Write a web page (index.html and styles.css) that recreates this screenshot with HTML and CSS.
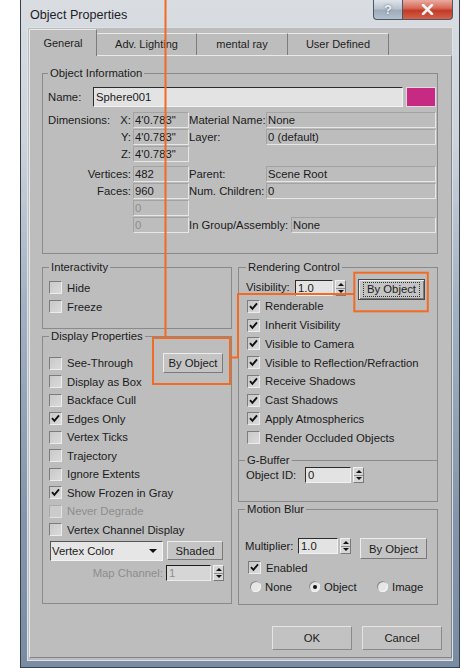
FILE: index.html
```html
<!DOCTYPE html>
<html>
<head>
<meta charset="utf-8">
<title>Object Properties</title>
<link rel="stylesheet" href="styles.css">
</head>
<body>
<div class="window">
  <div class="titlebar">
    <span class="title">Object Properties</span>
    <div class="caption">
      <span class="cap help">?</span>
      <span class="cap close"><svg width="13" height="11" viewBox="0 0 13 11"><path d="M2 1 L11 10 M11 1 L2 10" stroke="#fbf4f2" stroke-width="2.6" stroke-linecap="round"/></svg></span>
    </div>
  </div>

  <div class="client">
    <div class="tabs">
      <div class="tab active t-general">General</div>
      <div class="tab t-adv">Adv. Lighting</div>
      <div class="tab t-mental">mental ray</div>
      <div class="tab t-user">User Defined</div>
    </div>

    <div class="panel">
      <fieldset class="group info">
        <legend>Object Information</legend>
        <div class="name-row">
          <span class="name-label">Name:</span>
          <span class="edit name-edit">Sphere001</span>
          <span class="swatch"></span>
        </div>
        <div class="info-grid">
          <span class="lbl split r1 c1"><span>Dimensions:</span><span>X:</span></span>
          <span class="ro r1 c2">4'0.783"</span>
          <span class="lbl r1 c3">Material Name:</span>
          <span class="ro r1 c4">None</span>

          <span class="lbl right r2 c1">Y:</span>
          <span class="ro r2 c2">4'0.783"</span>
          <span class="lbl r2 c3">Layer:</span>
          <span class="ro r2 c4">0 (default)</span>

          <span class="lbl right r3 c1">Z:</span>
          <span class="ro r3 c2">4'0.783"</span>

          <span class="lbl right r4 c1">Vertices:</span>
          <span class="ro r4 c2">482</span>
          <span class="lbl r4 c3">Parent:</span>
          <span class="ro r4 c4">Scene Root</span>

          <span class="lbl right r5 c1">Faces:</span>
          <span class="ro r5 c2">960</span>
          <span class="lbl r5 c3">Num. Children:</span>
          <span class="ro r5 c4">0</span>

          <span class="ro dim r6 c2">0</span>

          <span class="ro dim r7 c2">0</span>
          <span class="group-row r7 c34"><span class="lbl">In Group/Assembly:</span><span class="ro grow">None</span></span>
        </div>
      </fieldset>

      <div class="cols">
        <div class="col col-left">
          <fieldset class="group interact">
            <legend>Interactivity</legend>
            <div class="check"><span class="cb"></span>Hide</div>
            <div class="check"><span class="cb"></span>Freeze</div>
          </fieldset>

          <fieldset class="group display">
            <legend>Display Properties</legend>
            <div class="list">
              <div class="check"><span class="cb"></span>See-Through<span class="btn by-object-d">By Object</span></div>
              <div class="check"><span class="cb"></span>Display as Box</div>
              <div class="check"><span class="cb"></span>Backface Cull</div>
              <div class="check"><span class="cb on"><svg width="9" height="9" viewBox="0 0 9 9"><path d="M1 4.2 L3.4 6.8 L8 1.4" fill="none" stroke="#111" stroke-width="1.9"/></svg></span>Edges Only</div>
              <div class="check"><span class="cb"></span>Vertex Ticks</div>
              <div class="check"><span class="cb"></span>Trajectory</div>
              <div class="check"><span class="cb"></span>Ignore Extents</div>
              <div class="check"><span class="cb on"><svg width="9" height="9" viewBox="0 0 9 9"><path d="M1 4.2 L3.4 6.8 L8 1.4" fill="none" stroke="#111" stroke-width="1.9"/></svg></span>Show Frozen in Gray</div>
              <div class="check disabled"><span class="cb"></span>Never Degrade</div>
              <div class="check"><span class="cb"></span>Vertex Channel Display</div>
            </div>
            <div class="combo-row">
              <div class="combo"><span>Vertex Color</span><span class="combo-arrow"></span></div>
              <span class="btn shaded">Shaded</span>
            </div>
            <div class="map-row">
              <span class="map-label">Map Channel:</span>
              <span class="edit map-edit">1</span>
              <span class="spin"><i class="up"></i><i class="dn"></i></span>
            </div>
          </fieldset>
        </div>

        <div class="col col-right">
          <fieldset class="group render">
            <legend>Rendering Control</legend>
            <div class="vis-row">
              <span class="vis-label">Visibility:</span>
              <span class="edit spin-edit vis-edit">1.0</span>
              <span class="spin"><i class="up"></i><i class="dn"></i></span>
              <span class="btn default by-object-r"><span class="focus">By Object</span></span>
            </div>
            <div class="rlist">
              <div class="check"><span class="cb on"><svg width="9" height="9" viewBox="0 0 9 9"><path d="M1 4.2 L3.4 6.8 L8 1.4" fill="none" stroke="#111" stroke-width="1.9"/></svg></span>Renderable</div>
              <div class="check"><span class="cb on"><svg width="9" height="9" viewBox="0 0 9 9"><path d="M1 4.2 L3.4 6.8 L8 1.4" fill="none" stroke="#111" stroke-width="1.9"/></svg></span>Inherit Visibility</div>
              <div class="check"><span class="cb on"><svg width="9" height="9" viewBox="0 0 9 9"><path d="M1 4.2 L3.4 6.8 L8 1.4" fill="none" stroke="#111" stroke-width="1.9"/></svg></span>Visible to Camera</div>
              <div class="check"><span class="cb on"><svg width="9" height="9" viewBox="0 0 9 9"><path d="M1 4.2 L3.4 6.8 L8 1.4" fill="none" stroke="#111" stroke-width="1.9"/></svg></span>Visible to Reflection/Refraction</div>
              <div class="check"><span class="cb on"><svg width="9" height="9" viewBox="0 0 9 9"><path d="M1 4.2 L3.4 6.8 L8 1.4" fill="none" stroke="#111" stroke-width="1.9"/></svg></span>Receive Shadows</div>
              <div class="check"><span class="cb on"><svg width="9" height="9" viewBox="0 0 9 9"><path d="M1 4.2 L3.4 6.8 L8 1.4" fill="none" stroke="#111" stroke-width="1.9"/></svg></span>Cast Shadows</div>
              <div class="check"><span class="cb on"><svg width="9" height="9" viewBox="0 0 9 9"><path d="M1 4.2 L3.4 6.8 L8 1.4" fill="none" stroke="#111" stroke-width="1.9"/></svg></span>Apply Atmospherics</div>
              <div class="check"><span class="cb"></span>Render Occluded Objects</div>
            </div>
            <div class="subhead"><span class="dash"></span><span class="subhead-text">G-Buffer</span><span class="rule"></span></div>
            <div class="id-row">
              <span class="id-label">Object ID:</span>
              <span class="edit spin-edit id-edit">0</span>
              <span class="spin"><i class="up"></i><i class="dn"></i></span>
            </div>
          </fieldset>

          <fieldset class="group motion">
            <legend>Motion Blur</legend>
            <div class="mult-row">
              <span class="mult-label">Multiplier:</span>
              <span class="edit spin-edit mult-edit">1.0</span>
              <span class="spin"><i class="up"></i><i class="dn"></i></span>
              <span class="btn by-object-m">By Object</span>
            </div>
            <div class="check enabled"><span class="cb on"><svg width="9" height="9" viewBox="0 0 9 9"><path d="M1 4.2 L3.4 6.8 L8 1.4" fill="none" stroke="#111" stroke-width="1.9"/></svg></span>Enabled</div>
            <div class="radio-row">
              <span class="opt o1"><span class="radio"></span>None</span>
              <span class="opt o2"><span class="radio on"></span>Object</span>
              <span class="opt o3"><span class="radio"></span>Image</span>
            </div>
          </fieldset>
        </div>
      </div>

      <div class="actions">
        <span class="btn action">OK</span>
        <span class="btn action">Cancel</span>
      </div>
    </div>
  </div>
</div>

<svg class="callouts" width="462" height="668" viewBox="0 0 462 668">
  <g fill="none" stroke="#f26b22" stroke-width="2">
    <line x1="165.5" y1="0" x2="165.5" y2="338"/>
    <rect x="153" y="338" width="77" height="46"/>
    <polyline points="230,357.5 238,357.5 238,294 354,294"/>
    <rect x="354.3" y="272.7" width="73.5" height="38.6"/>
  </g>
</svg>
</body>
</html>
```

FILE: styles.css
```css
* {
  box-sizing: border-box;
}

html,
body {
  margin: 0;
  padding: 0;
  background: #ffffff;
  overflow: hidden;
}

body {
  position: relative;
  width: 462px;
  height: 668px;
  font-family: "Liberation Sans", Arial, sans-serif;
  font-size: 11.3px;
  color: #1b1b1b;
}

/* ---------- window frame ---------- */
.window {
  margin-left: 20px;
  width: 440px;
  height: 668px;
  border: 1px solid #36414e;
  border-top: none;
  padding: 0 6px 6px;
  background: linear-gradient(to bottom, #d9dde2 0, #cdd3da 140px, #a3b2c3 300px, #8495ab 520px, #7a8ca3 100%);
  display: flex;
  flex-direction: column;
}

.titlebar {
  height: 27px;
  flex: none;
  display: flex;
  justify-content: space-between;
  align-items: flex-start;
}

.title {
  font-size: 12.6px;
  line-height: 15px;
  color: #1d2228;
  padding: 8px 0 0 3px;
}

.caption {
  display: flex;
}

.cap {
  height: 20px;
  display: flex;
  align-items: center;
  justify-content: center;
  border: 1px solid #4c5866;
  border-top: none;
}

.help {
  width: 29px;
  border-right: none;
  border-radius: 0 0 0 4px;
  background: linear-gradient(#dfe4ea, #b9c3ce 45%, #9eabba 55%, #b4c0cd);
  color: #eef2f6;
  font-weight: bold;
  font-size: 13px;
  text-shadow: 0 0 2px #56606c;
}

.close {
  width: 51px;
  border-radius: 0 0 4px 0;
  background: linear-gradient(#e9aba1, #d66a58 42%, #c23a26 56%, #d4624c);
}

.client {
  flex: 1;
  border: 1px solid #dbe2ea;
  background: #bdbdbd;
  display: flex;
  flex-direction: column;
}

/* ---------- tabs ---------- */
.tabs {
  height: 27px;
  flex: none;
  display: flex;
  align-items: flex-end;
  padding-left: 1px;
}

.tab {
  height: 22px;
  line-height: 20px;
  text-align: center;
  font-size: 11px;
  color: #1e1e1e;
  border-top: 1px solid #e9e9e9;
  border-left: 1px solid #e9e9e9;
  border-right: 1px solid #7c7c7c;
}

.tab.active {
  position: relative;
  z-index: 1;
  height: 27px;
  margin-bottom: -1px;
  padding-top: 3px;
  background: #bdbdbd;
}

.t-general { width: 68px; }
.t-adv { width: 100px; border-left: none; }
.t-mental { width: 91px; border-left: none; }
.t-user { width: 101px; border-left: none; }

.panel {
  flex: 1;
  margin: 0 0 2px 1px;
  border: 1px solid;
  border-color: #e9e9e9 #848484 #848484 #e9e9e9;
  padding: 10px 13px 7px 12px;
  display: flex;
  flex-direction: column;
}

/* ---------- group boxes ---------- */
fieldset.group {
  margin: 0;
  min-width: 0;
  border: 1px solid #8a8a8a;
}

legend {
  padding: 0 2px;
  line-height: 14px;
  color: #1b1b1b;
}

.info {
  padding: 7px 1px 20px 5px;
}

.name-row {
  height: 20px;
  display: flex;
  align-items: center;
}

.name-label {
  width: 45px;
}

.edit {
  background: #e3e3e3;
  border: 1px solid;
  border-color: #2c2c2c #f2f2f2 #f2f2f2 #2c2c2c;
  white-space: nowrap;
}

.name-edit {
  width: 310px;
  height: 20px;
  line-height: 18px;
  padding-left: 2px;
}

.swatch {
  width: 30px;
  height: 20px;
  margin-left: 3px;
  background: #c72a83;
  border: 1px solid #e4d8df;
}

.info-grid {
  margin-top: 5px;
  display: grid;
  grid-template-columns: 85px 56px 77px 1fr;
  grid-template-rows: 16px 16px 16px 19px 16px 16px 16px;
  row-gap: 1px;
}

.lbl {
  line-height: 16px;
  white-space: nowrap;
}

.lbl.right {
  text-align: right;
  padding-right: 2px;
}

.lbl.split {
  display: flex;
  justify-content: space-between;
  padding-right: 2px;
}

.ro {
  height: 16px;
  line-height: 14px;
  padding-left: 1px;
  border: 1px solid;
  border-color: #a3a3a3 #e7e7e7 #e7e7e7 #a3a3a3;
  white-space: nowrap;
  overflow: hidden;
}

.ro.dim {
  color: #8c8c8c;
}

.r1 { grid-row: 1; }
.r2 { grid-row: 2; }
.r3 { grid-row: 3; }
.r4 { grid-row: 4; align-self: end; }
.r5 { grid-row: 5; }
.r6 { grid-row: 6; }
.r7 { grid-row: 7; }
.c1 { grid-column: 1; }
.c2 { grid-column: 2; }
.c3 { grid-column: 3; }
.c4 { grid-column: 4; }
.c34 { grid-column: 3 / 5; }

.group-row {
  display: flex;
}

.group-row .lbl {
  width: 102px;
}

.grow {
  flex: 1;
}

/* ---------- columns ---------- */
.cols {
  margin-top: 6px;
  display: grid;
  grid-template-columns: 190px 200px;
  column-gap: 6px;
  align-items: start;
}

.col {
  display: flex;
  flex-direction: column;
}

.interact {
  padding: 4px 0 12px 6px;
}

.display {
  margin-top: 4px;
  padding: 11px 0 22px 6px;
}

.check {
  height: 19px;
  display: flex;
  align-items: center;
  white-space: nowrap;
}

.check.disabled {
  color: #8d8d8d;
}

.cb {
  width: 13px;
  height: 13px;
  flex: none;
  margin-right: 5px;
  border: 1px solid;
  border-color: #7c7c7c #ececec #ececec #7c7c7c;
  background: linear-gradient(135deg, #c9c9c9, #dadada);
  display: flex;
  align-items: center;
  justify-content: center;
}

.check.disabled .cb {
  border-color: #a9a9a9 #e3e3e3 #e3e3e3 #a9a9a9;
  background: #cbcbcb;
}

.list .check {
  height: 18.5px;
}

.btn {
  display: flex;
  align-items: center;
  justify-content: center;
  background: #c4c4c4;
  border: 1px solid;
  border-color: #ededed #7a7a7a #7a7a7a #ededed;
  white-space: nowrap;
  color: #1b1b1b;
}

.by-object-d {
  width: 60px;
  height: 20px;
  margin-left: auto;
  margin-right: 8px;
}

.combo-row {
  margin-top: 2px;
  height: 20px;
  display: flex;
  padding-left: 1px;
}

.combo {
  width: 113px;
  height: 20px;
  display: flex;
  align-items: center;
  padding-left: 1px;
  background: #e6e6e6;
  border: 1px solid;
  border-color: #555555 #f3f3f3 #f3f3f3 #555555;
}

.combo-arrow {
  margin-left: auto;
  margin-right: 5px;
  width: 0;
  height: 0;
  border-left: 4px solid transparent;
  border-right: 4px solid transparent;
  border-top: 4px solid #111;
}

.shaded {
  width: 56px;
  height: 19px;
  margin-left: 4px;
}

.map-row {
  margin-top: 4px;
  height: 16px;
  display: flex;
  align-items: center;
}

.map-label {
  width: 114px;
  text-align: right;
  margin-right: 3px;
  color: #8d8d8d;
  line-height: 16px;
}

.map-edit {
  width: 45px;
  height: 16px;
  line-height: 14px;
  padding-left: 2px;
  background: #d6d6d6;
  border-color: #1e1e1e #ececec #ececec #1e1e1e;
  color: #8d8d8d;
}

.spin {
  width: 11px;
  height: 16px;
  flex: none;
  margin-left: 2px;
  display: flex;
  flex-direction: column;
  border: 1px solid;
  border-color: #f0f0f0 #7a7a7a #7a7a7a #f0f0f0;
  background: #d6d6d6;
}

.spin i {
  flex: 1;
  display: flex;
  align-items: center;
  justify-content: center;
}

.spin i::after {
  content: "";
  width: 0;
  height: 0;
  border-left: 3px solid transparent;
  border-right: 3px solid transparent;
}

.spin .up {
  border-bottom: 1px solid #8c8c8c;
}

.spin .up::after {
  border-bottom: 3px solid #111;
}

.spin .dn::after {
  border-top: 3px solid #111;
}

/* ---------- right column ---------- */
.render {
  padding: 4px 1px 18px 7px;
}

.vis-row {
  height: 19px;
  display: flex;
  align-items: flex-start;
}

.vis-label {
  width: 49px;
  line-height: 19px;
}

.spin-edit {
  height: 16px;
  line-height: 14px;
  padding-left: 2px;
}

.vis-edit {
  width: 38px;
  margin-top: 2px;
}

.vis-row .spin {
  margin-top: 2px;
}

.btn.default {
  border: 1px solid #4a4a4a;
  box-shadow: inset 1px 1px 0 #ededed, inset -1px -1px 0 #7a7a7a;
}

.by-object-r {
  width: 67px;
  height: 21px;
  margin-top: 1px;
  margin-left: 12px;
}

.focus {
  outline: 1px dotted #333;
  outline-offset: 0;
  padding: 0 3px;
  line-height: 13px;
}

.rlist .check {
  height: 18.75px;
  padding-left: 1px;
}

.subhead {
  margin: 6px -2px 0 -7px;
  height: 14px;
  display: flex;
  align-items: center;
}

.dash,
.rule {
  height: 1px;
  background: #8a8a8a;
}

.dash {
  width: 6px;
}

.rule {
  flex: 1;
}

.subhead-text {
  padding: 0 2px;
  line-height: 14px;
}

.id-row {
  height: 16px;
  display: flex;
  align-items: center;
}

.id-label {
  width: 59px;
  line-height: 16px;
}

.id-edit {
  width: 46px;
}

.motion {
  margin-top: 5px;
  padding: 22px 1px 8px 6px;
}

.mult-row {
  height: 20px;
  display: flex;
  align-items: flex-start;
}

.mult-label {
  width: 53px;
  line-height: 17px;
}

.mult-edit {
  width: 40px;
}

.by-object-m {
  width: 67px;
  height: 21px;
  margin-left: 9px;
}

.check.enabled {
  padding-left: 3px;
}

.radio-row {
  height: 19px;
  display: flex;
  align-items: center;
  padding-left: 5px;
}

.opt {
  display: flex;
  align-items: center;
  white-space: nowrap;
}

.o1 { width: 59px; }
.o2 { width: 68px; }

.radio {
  width: 11px;
  height: 11px;
  flex: none;
  margin-right: 4px;
  border-radius: 50%;
  background: #e6e6e6;
  box-shadow: inset 1px 1px 0 #8a8a8a, inset -1px -1px 0 #f4f4f4;
  display: flex;
  align-items: center;
  justify-content: center;
}

.radio.on::after {
  content: "";
  width: 4px;
  height: 4px;
  border-radius: 50%;
  background: #111;
}

/* ---------- dialog buttons ---------- */
.actions {
  margin-top: auto;
  margin-right: -4px;
  display: flex;
  justify-content: flex-end;
  column-gap: 10px;
}

.action {
  width: 80px;
  height: 24px;
  background: #c2c2c2;
  border-color: #e4e4e4 #8a8a8a #8a8a8a #e4e4e4;
}

/* ---------- annotation overlay ---------- */
.callouts {
  position: absolute;
  left: 0;
  top: 0;
  pointer-events: none;
}
```
